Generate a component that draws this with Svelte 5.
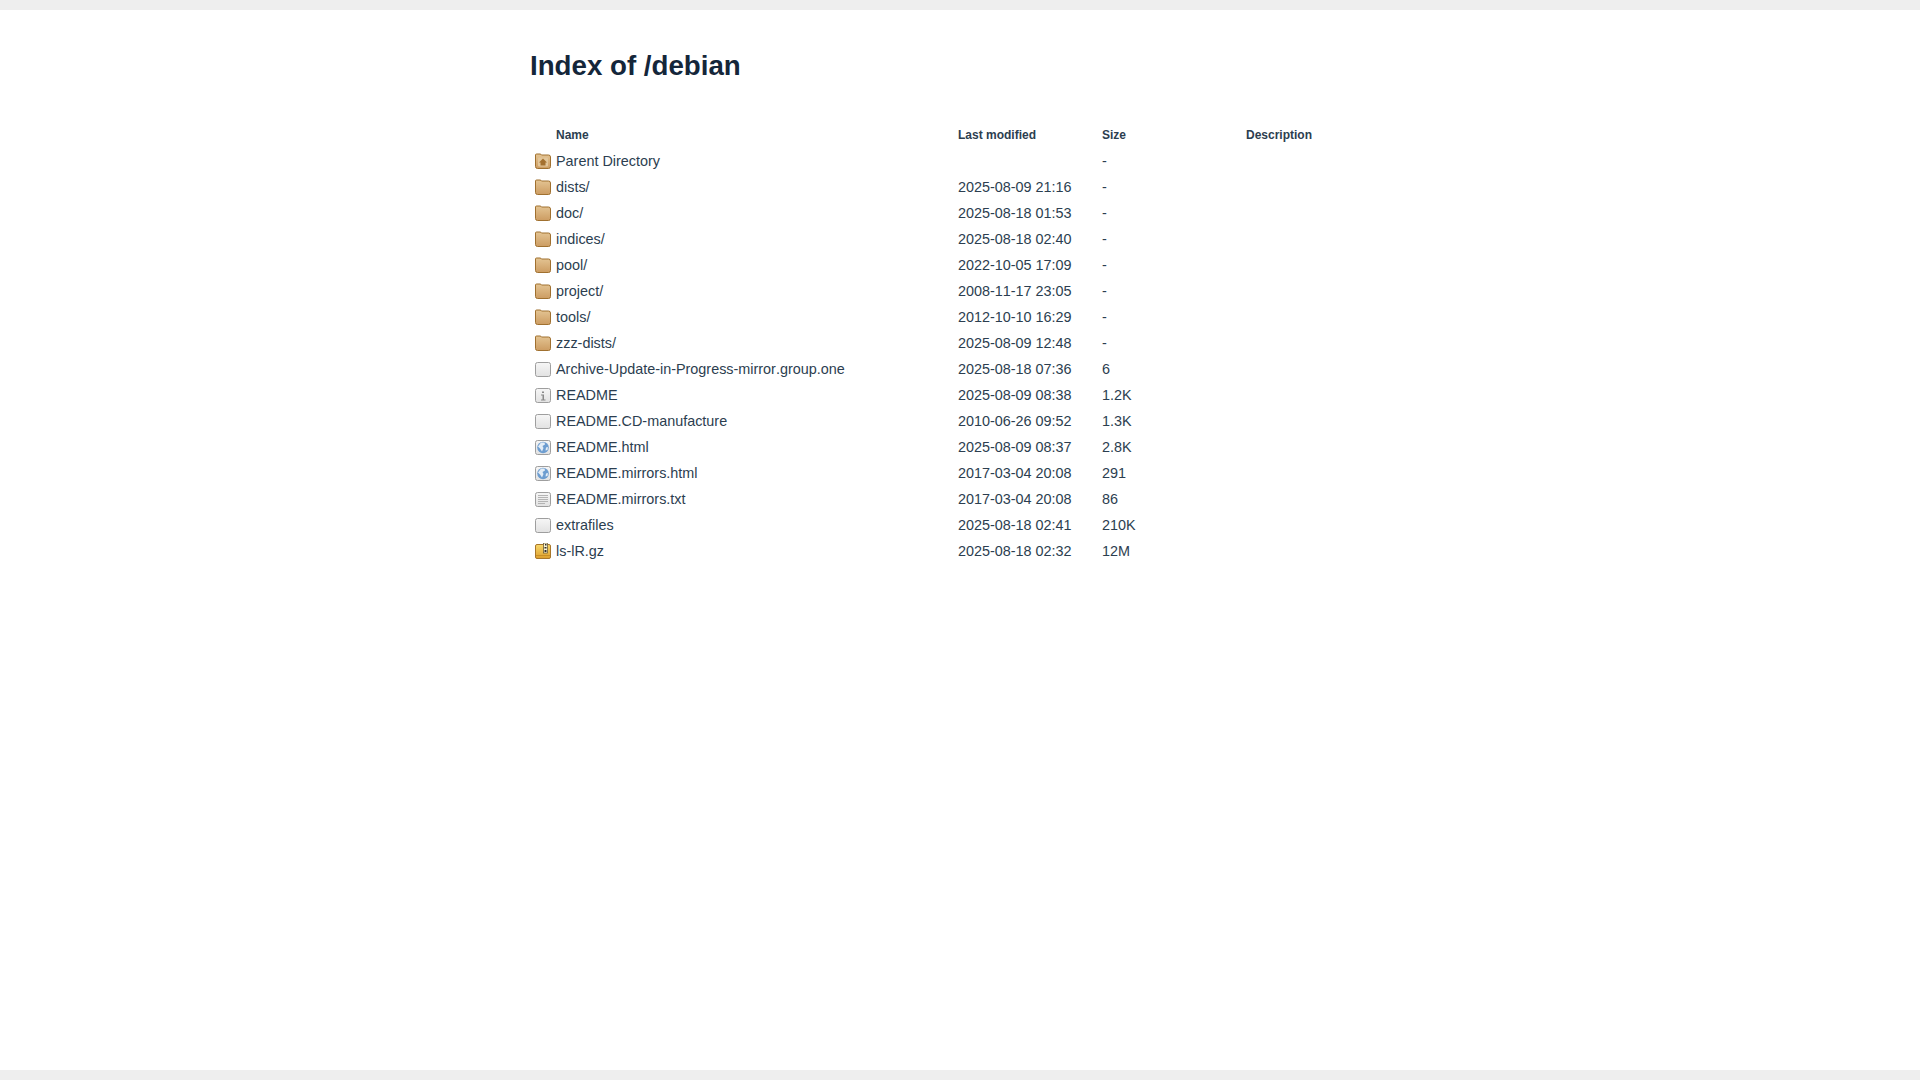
<script>
  const rows = [
    { icon: 'parent', name: 'Parent Directory', date: '', size: '-' },
    { icon: 'folder', name: 'dists/', date: '2025-08-09 21:16', size: '-' },
    { icon: 'folder', name: 'doc/', date: '2025-08-18 01:53', size: '-' },
    { icon: 'folder', name: 'indices/', date: '2025-08-18 02:40', size: '-' },
    { icon: 'folder', name: 'pool/', date: '2022-10-05 17:09', size: '-' },
    { icon: 'folder', name: 'project/', date: '2008-11-17 23:05', size: '-' },
    { icon: 'folder', name: 'tools/', date: '2012-10-10 16:29', size: '-' },
    { icon: 'folder', name: 'zzz-dists/', date: '2025-08-09 12:48', size: '-' },
    { icon: 'blank', name: 'Archive-Update-in-Progress-mirror.group.one', date: '2025-08-18 07:36', size: '6' },
    { icon: 'info', name: 'README', date: '2025-08-09 08:38', size: '1.2K' },
    { icon: 'blank', name: 'README.CD-manufacture', date: '2010-06-26 09:52', size: '1.3K' },
    { icon: 'globe', name: 'README.html', date: '2025-08-09 08:37', size: '2.8K' },
    { icon: 'globe', name: 'README.mirrors.html', date: '2017-03-04 20:08', size: '291' },
    { icon: 'text', name: 'README.mirrors.txt', date: '2017-03-04 20:08', size: '86' },
    { icon: 'blank', name: 'extrafiles', date: '2025-08-18 02:41', size: '210K' },
    { icon: 'zip', name: 'ls-lR.gz', date: '2025-08-18 02:32', size: '12M' }
  ];
</script>

<div class="page">
  <main>
    <h1>Index of /debian</h1>
    <table>
      <thead>
        <tr>
          <th class="ic"></th>
          <th class="name">Name</th>
          <th class="date">Last modified</th>
          <th class="size">Size</th>
          <th>Description</th>
        </tr>
      </thead>
      <tbody>
        {#each rows as row}
          <tr>
            <td class="ic">
              <svg width="16" height="16" viewBox="0 0 16 16">
                <defs>
                  <linearGradient id="fold" x1="0" y1="0" x2="0" y2="1">
                    <stop offset="0" stop-color="#e4c594" />
                    <stop offset="1" stop-color="#cc9c62" />
                  </linearGradient>
                  <linearGradient id="gold" x1="0" y1="0" x2="0" y2="1">
                    <stop offset="0" stop-color="#f8d86c" />
                    <stop offset="1" stop-color="#dc9e2c" />
                  </linearGradient>
                  <linearGradient id="page" x1="0" y1="0" x2="0" y2="1">
                    <stop offset="0" stop-color="#f6f6f6" />
                    <stop offset="1" stop-color="#e2e2e2" />
                  </linearGradient>
                </defs>
                {#if row.icon === 'folder' || row.icon === 'parent'}
                  <path d="M.5 13.500 V2 Q.5 1 1.500 1 H5 Q6 1 6.500 2 H13.500 Q15.500 2 15.500 4 V13.500 Q15.500 15.500 13.500 15.500 H2.500 Q.5 15.500 .5 13.500 Z" fill="url(#fold)" stroke="#a0702f" />
                  {#if row.icon === 'parent'}
                    <rect x="3" y="4.500" width="10" height="9" rx="1" fill="#e2c69a" />
                    <path d="M8 5.500 L12 9.500 H10.500 V12.500 H5.500 V9.500 H4 Z" fill="#a4702f" />
                  {/if}
                {:else if row.icon === 'zip'}
                  <rect x=".5" y="1.500" width="15" height="14" rx="1.500" fill="url(#gold)" stroke="#a8762a" />
                  <path d="M1 12.500 H15" stroke="#c98f26" />
                  <rect x="8.500" y="0" width="4" height="10" fill="#fbf3d0" stroke="#5c4c2a" stroke-width=".7" />
                  <path d="M10 1 h1.500 v1.500 h-1.500 z M9.500 4 h2 v1.500 h-2 z M9.500 7 h2 v2 h-2 z" fill="#2b2b2b" />
                {:else}
                  <rect x=".5" y="1.500" width="15" height="14" rx="2" fill="url(#page)" stroke="#9e9e9e" />
                  {#if row.icon === 'info'}
                    <path d="M7 4.500 h2 v1.500 h-2 z M6 7.500 h3 v5 h1.500 v1 h-4.500 v-1 h1.500 v-4 h-1.500 z" fill="#8a8a8a" />
                  {:else if row.icon === 'globe'}
                    <circle cx="8" cy="8.500" r="5.800" fill="#6d9dd0" />
                    <path d="M6 3.500 L9.500 3.500 L10 5.500 L7.500 7 L8.500 9 L7 12.500 L5 9.500 L3 7.500 Z M11 8.500 L13 8 L12.500 11 L10.500 11.500 Z" fill="#e4edf6" />
                  {:else if row.icon === 'text'}
                    <path d="M3 4.500 H13 M3 6.500 H13 M3 8.500 H13 M3 10.500 H13 M3 12.500 H10" stroke="#b4b4b4" stroke-width="1" fill="none" />
                  {/if}
                {/if}
              </svg>
            </td>
            <td class="name">{row.name}</td>
            <td class="date">{row.date}</td>
            <td class="size">{row.size}</td>
            <td></td>
          </tr>
        {/each}
      </tbody>
    </table>
  </main>
</div>

<style>
  :global(body) {
    margin: 0;
    background: #fff;
  }
  .page {
    box-sizing: border-box;
    height: 1080px;
    border-top: 10px solid #eee;
    border-bottom: 10px solid #eee;
    font-family: "Liberation Sans", Arial, sans-serif;
    color: #2c3e50;
  }
  main {
    width: 860px;
    margin: 0 auto;
    padding-top: 40px;
  }
  h1 {
    margin: 0 0 40px;
    font-size: 27.7px;
    line-height: 32px;
    font-weight: bold;
    color: #14263a;
  }
  table {
    width: 860px;
    border-collapse: collapse;
    table-layout: fixed;
    font-size: 14.4px;
    font-kerning: none;
  }
  th {
    height: 26px;
    padding: 0;
    font-size: 12px;
    font-weight: bold;
    text-align: left;
  }
  td {
    height: 26px;
    padding: 0;
  }
  .ic {
    width: 26px;
    text-align: center;
  }
  .ic svg {
    display: block;
    margin: 0 auto;
  }
  .name {
    width: 402px;
  }
  .date,
  .size {
    width: 144px;
  }
</style>
